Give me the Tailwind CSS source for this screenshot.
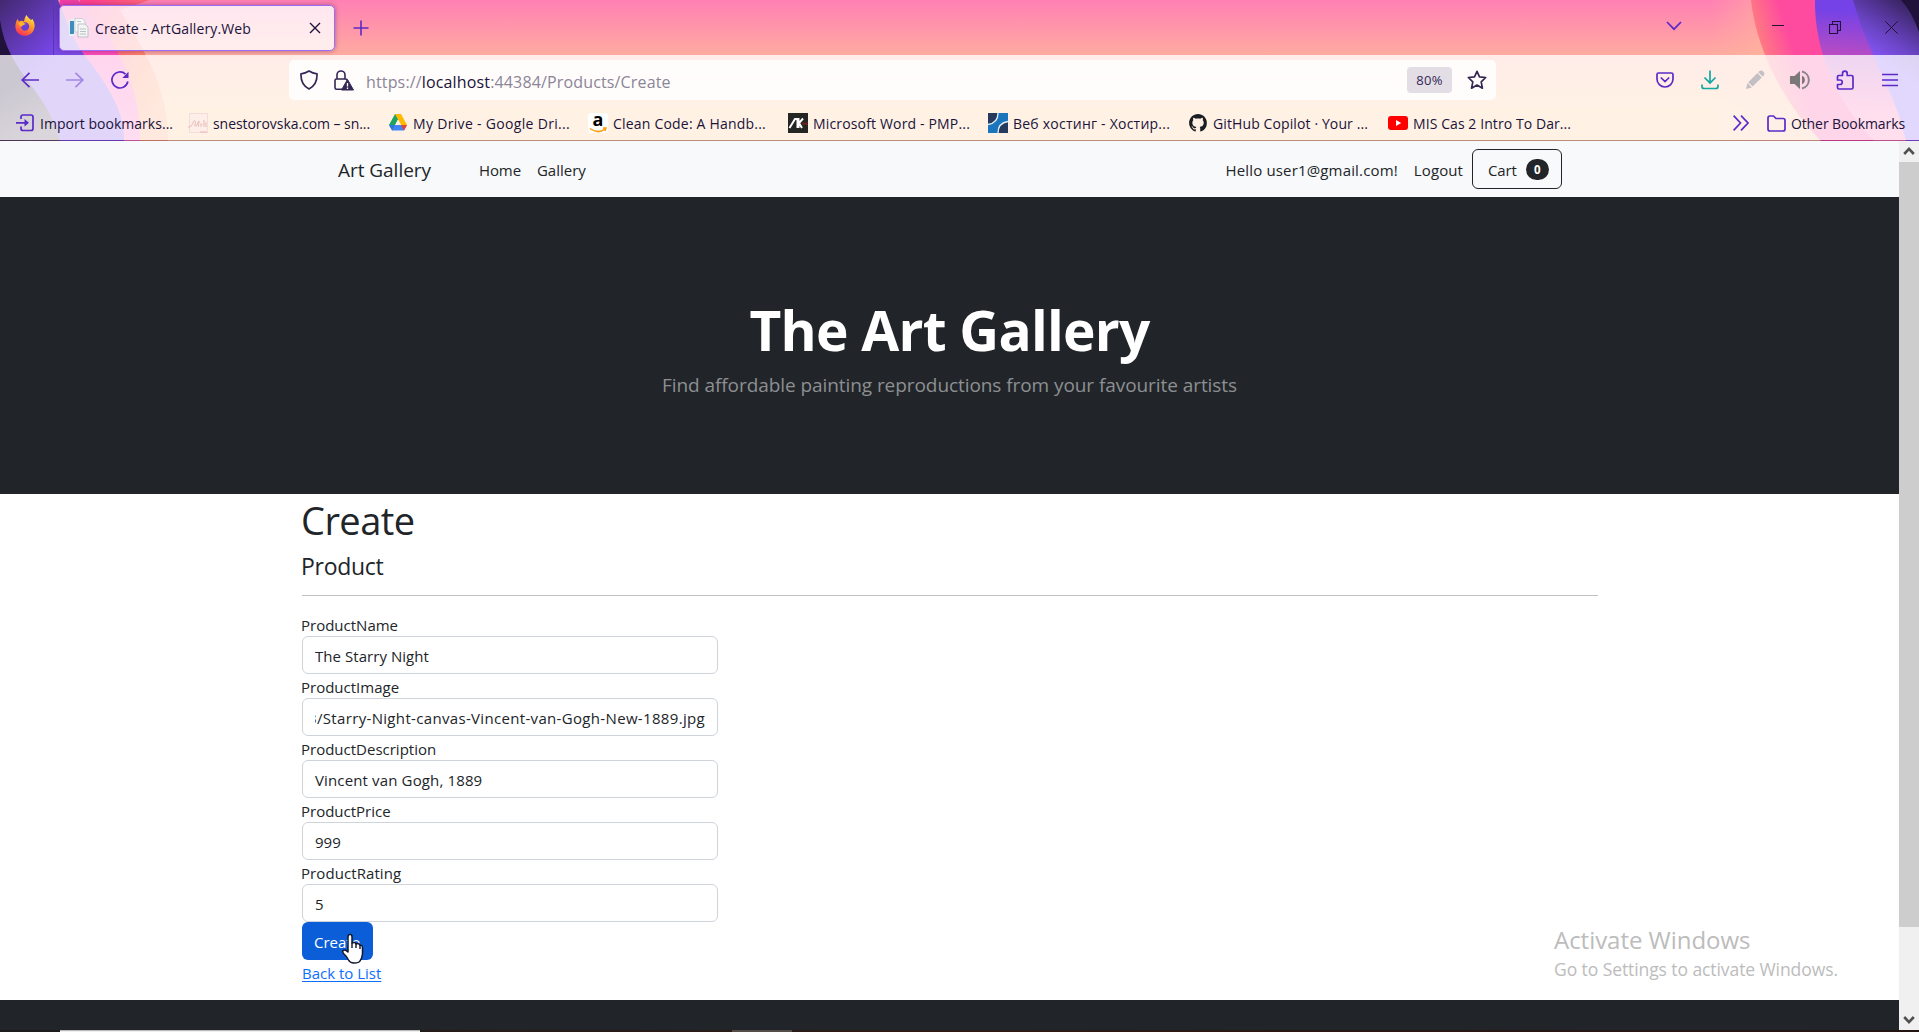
<!DOCTYPE html>
<html lang="en">
<head>
<meta charset="utf-8">
<title>Create - ArtGallery.Web</title>
<script src="https://cdn.jsdelivr.net/npm/@tailwindcss/browser@4"></script>
</head>
<body class="w-[1919px] h-[1032px] overflow-hidden relative flex flex-col bg-white text-[#212529] font-['Open_Sans','Noto_Sans',sans-serif] text-[15px]">

<!-- Browser chrome -->
<header class="relative isolate h-[141px] shrink-0 flex flex-col text-[#20123a] text-[14px] whitespace-nowrap">
  <svg class="absolute inset-0 -z-10" width="1919" height="141" viewBox="0 0 1919 141">
    <defs>
      <linearGradient id="base" x1="0" y1="0" x2="0" y2="1"><stop offset="0" stop-color="#ff80b4"/><stop offset=".39" stop-color="#ffaba0"/><stop offset=".78" stop-color="#ffc68e"/><stop offset="1" stop-color="#ffc890"/></linearGradient>
      <linearGradient id="lp" gradientUnits="userSpaceOnUse" x1="0" y1="0" x2="60" y2="60"><stop offset="0" stop-color="#43286f"/><stop offset=".8" stop-color="#7344df"/><stop offset="1" stop-color="#7c4ce8"/></linearGradient>
      <linearGradient id="lm" gradientUnits="userSpaceOnUse" x1="0" y1="0" x2="0" y2="141"><stop offset="0" stop-color="#f03fa5"/><stop offset=".35" stop-color="#ff4bb5"/><stop offset="1" stop-color="#ff70c0"/></linearGradient>
      <linearGradient id="lo" gradientUnits="userSpaceOnUse" x1="90" y1="0" x2="190" y2="80"><stop offset="0" stop-color="#ff3f90"/><stop offset=".7" stop-color="#ff8c62"/><stop offset="1" stop-color="#ffa070"/></linearGradient>
      <linearGradient id="gd" gradientUnits="userSpaceOnUse" x1="0" y1="90" x2="30" y2="141"><stop offset="0" stop-color="#20123a"/><stop offset="1" stop-color="#665068"/></linearGradient>
      <linearGradient id="rm" gradientUnits="userSpaceOnUse" x1="1752" y1="50" x2="1815" y2="30"><stop offset="0" stop-color="#ff8a78"/><stop offset=".6" stop-color="#ff4b9f"/><stop offset="1" stop-color="#ff4b9f"/></linearGradient>
      <linearGradient id="rp" gradientUnits="userSpaceOnUse" x1="1850" y1="0" x2="1840" y2="110"><stop offset=".1" stop-color="#7442e6"/><stop offset=".5" stop-color="#b74cc4"/><stop offset="1" stop-color="#ff70b4"/></linearGradient>
      <linearGradient id="rv" gradientUnits="userSpaceOnUse" x1="1905" y1="5" x2="1872" y2="55"><stop offset="0" stop-color="#3c2668"/><stop offset=".6" stop-color="#6a44c4"/><stop offset="1" stop-color="#8355f3"/></linearGradient>
      <linearGradient id="rg" gradientUnits="userSpaceOnUse" x1="1710" y1="0" x2="1775" y2="0"><stop offset="0" stop-color="#ffb0a0" stop-opacity="0"/><stop offset="1" stop-color="#ffb89a" stop-opacity=".7"/></linearGradient>
    </defs>
    <rect width="1919" height="141" fill="url(#base)"/>
    <path d="M80 0H150L120 10C150 60 168 90 168 141H60Z" fill="url(#lo)"/>
    <path d="M60 0H78C115 40 140 80 140 141H40Z" fill="url(#lm)"/>
    <path d="M0 0H58C70 30 75 45 90 62C110 90 124 110 124 141H0Z" fill="url(#lp)"/>
    <path d="M0 20C8 75 48 90 60 141H0Z" fill="url(#gd)"/>
    <rect x="1700" width="219" height="141" fill="url(#rg)"/>
    <path d="M1751 0C1756 50 1785 105 1821 141H1919V0Z" fill="url(#rm)"/>
    <path d="M1815 0C1814 55 1840 105 1874 141H1919V0Z" fill="url(#rp)"/>
    <path d="M1853 0C1868 55 1895 90 1906 141H1919V0Z" fill="url(#rv)"/>
    <path d="M1901 0Q1912 12 1919 32V0Z" fill="#20123a"/>
    <rect y="55" width="1919" height="85" fill="#fff" fill-opacity=".77"/>
    <rect y="140" width="1919" height="1" fill="#301040" fill-opacity=".32"/>
  </svg>

  <!-- Tab strip -->
  <div class="h-[55px] flex items-center">
    <div class="w-[54px] h-full flex items-center pl-[15px] border-r border-[#5a35b8]">
      <svg class="-mt-1" width="20" height="22" viewBox="0 0 20 22"><defs><linearGradient id="ff" x1=".8" y1="0" x2=".3" y2="1"><stop offset="0" stop-color="#fff04a"/><stop offset=".45" stop-color="#ff9a2c"/><stop offset="1" stop-color="#ff2f56"/></linearGradient></defs><path d="M11.500 0C13 2.500 14.500 3.500 16 5L17.500 4C20.500 9 20 13 18 16.500C15 21.500 7 22 3 18C-.5 14.500-.3 9 2.500 4L4 6.500C6 5 8 6 9 6.500C9.500 4 10 2 11.500 0Z" fill="url(#ff)"/><circle cx="10" cy="11.500" r="4.200" fill="#6b3fd4"/><path d="M3.500 8C6 6.500 8 7 9.500 8.200L11 9C9 10 7 10 6.500 12C5 11 4 10 3.500 8Z" fill="#ffb52b"/></svg>
    </div>
    <div class="ml-[5px] w-[276px] h-[46px] rounded-[5px] border border-[#9d6bf5] bg-white/80 shadow-[0_0_5px_rgba(60,20,80,0.45)] flex items-center pl-[9px] pr-[13px]">
      <svg width="20" height="20" viewBox="0 0 20 20"><path d="M0 1H6V18H0Z" fill="#e8eef2"/><path d="M1 3H5V16H1Z" fill="#3d8ebc"/><path d="M6 .5H13L16 3V14H6Z" fill="#f7f8f8" stroke="#bcc8cc" stroke-width=".8"/><path d="M9 6H16L19 9V19H9Z" fill="#f3f4f4" stroke="#aeb9bd" stroke-width=".8"/><path d="M11 11H17M11 13.500H17M11 16H17M8 3.500H12" stroke="#b8c2c6"/></svg>
      <span class="ml-[6px] mt-0.5 tracking-[0.13px]">Create - ArtGallery.Web</span>
      <svg class="ml-auto" width="12" height="12" viewBox="0 0 12 12"><path d="M1 1L11 11M11 1L1 11" stroke="#20123a" stroke-width="1.400"/></svg>
    </div>
    <svg class="ml-[18px]" width="16" height="16" viewBox="0 0 16 16"><path d="M8 0.500V15.500M.5 8H15.500" stroke="#5b2ac8" stroke-width="1.600"/></svg>
    <svg class="ml-auto mr-[90px] -mt-1" width="16" height="10" viewBox="0 0 16 10"><path d="M1 1L8 8.200L15 1" fill="none" stroke="#5b2ac8" stroke-width="1.700"/></svg>
    <svg class="mr-[45px] -mt-1" width="12" height="3" viewBox="0 0 12 3"><path d="M0 1.500H12" stroke="#20123a"/></svg>
    <svg class="mr-[44px] -mt-px" width="12" height="13" viewBox="0 0 12 13"><path d="M.5 3.500H8.500V12.500H.5ZM3.500 3.500V.5H11.500V9.500H8.500" fill="none" stroke="#20123a" stroke-width="1.100"/></svg>
    <svg class="mr-[21px] -mt-px" width="13" height="13" viewBox="0 0 13 13"><path d="M.3.3L12.700 12.700M12.700.3L.3 12.700" stroke="#20123a"/></svg>
  </div>

  <!-- Navigation toolbar -->
  <div class="h-[50px] flex items-center text-[#5b2ac8]">
    <div class="w-[289px] pl-[21px] flex items-center gap-[27px]">
      <svg width="18" height="16" viewBox="0 0 18 16" fill="none" stroke="currentColor" stroke-width="1.700"><path d="M18 8H1.200M8.500.8L1.200 8L8.500 15.200"/></svg>
      <svg class="opacity-45" width="18" height="16" viewBox="0 0 18 16" fill="none" stroke="currentColor" stroke-width="1.700"><path d="M0 8H16.800M9.500.8L16.800 8L9.500 15.200"/></svg>
      <svg width="18" height="18" viewBox="0 0 18 18" fill="none" stroke="currentColor" stroke-width="1.700"><path d="M16.800 10.500A8 8 0 1 1 14.500 3.200"/><path d="M17.500.8V7H11.300Z" fill="currentColor" stroke="none"/></svg>
    </div>
    <div class="w-[1207px] h-10 rounded-[5px] bg-white/85 flex items-center pl-[11px] pr-[9px] text-[#332754]">
      <svg width="18" height="20" viewBox="0 0 18 20" fill="none" stroke="currentColor" stroke-width="1.700" stroke-linejoin="round"><path d="M9 1C11.500 2.600 14 3.500 17 3.900C17.300 10.500 15 16 9 19C3 16 .7 10.500 1 3.900C4 3.500 6.500 2.600 9 1Z"/></svg>
      <svg class="ml-4" width="20" height="21" viewBox="0 0 20 21"><path d="M8 19.200H2.500Q1 19.200 1 17.700V10.500Q1 9 2.500 9H11.500Q13 9 13 10.500M3 9V5A4 4 0 0 1 11 5V9" fill="none" stroke="currentColor" stroke-width="1.600"/><path d="M13.500 9.500L19.500 20H7.500Z" fill="currentColor" stroke="currentColor" stroke-linejoin="round"/><path d="M13.500 13V16.500M13.500 17.500V19" stroke="#fff" stroke-width="1.300"/></svg>
      <span class="ml-3 mt-1 text-[16px] tracking-[0.15px] text-[#8b8598]">https://<span class="text-[#20123a]">localhost</span>:44384/Products/Create</span>
      <span class="ml-auto w-[45px] h-[26px] rounded bg-[#e3dde5] flex items-center justify-center pt-0.5 text-[13px] tracking-[0.3px]">80%</span>
      <svg class="ml-[15px]" width="20" height="20" viewBox="0 0 20 20"><path d="M10 1.300L12.500 6.800L18.700 7.500L14.200 11.800L15.400 18.200L10 15L4.600 18.200L5.800 11.800L1.300 7.500L7.500 6.800Z" fill="none" stroke="currentColor" stroke-width="1.700" stroke-linejoin="round"/></svg>
    </div>
    <div class="ml-auto mr-[7px] grid grid-cols-6 w-[270px] justify-items-center items-center">
      <svg width="18" height="16" viewBox="0 0 18 16" fill="none" stroke="currentColor" stroke-width="1.700"><path d="M2.500 1H15.500Q17 1 17 2.500V7A8 8 0 0 1 1 7V2.500Q1 1 2.500 1ZM4.800 5.500L9 9.500L13.200 5.500"/></svg>
      <svg class="text-[#10a8a0]" width="18" height="20" viewBox="0 0 18 20" fill="none" stroke="currentColor" stroke-width="1.700"><path d="M9 .5V13M3.500 7.500L9 13L14.500 7.500M1 14.500V16.500Q1 18.500 3 18.500H15Q17 18.500 17 16.500V14.500"/></svg>
      <svg width="20" height="20" viewBox="0 0 20 20" fill="#c3c0c3"><path d="M1 19L2.500 13L6.800 17.400ZM3.200 12.200L12.500 3L16.800 7.400L7.600 16.600ZM13.300 2.200L14.500 1C15.500 0 17 .3 18 1.200L18.800 2.200C19.700 3.200 19.700 4.500 18.800 5.400L17.600 6.600Z"/></svg>
      <svg width="20" height="20" viewBox="0 0 20 20"><path d="M0 6H4.500L10 1V19L4.500 14H0Z" fill="#7b7878"/><path d="M12 5.800A4.500 4.500 0 0 1 12 14.200Z" fill="#7b7878"/><path d="M12 1.500A8.700 8.700 0 0 1 12 18.500" fill="none" stroke="#8b8588" stroke-width="2"/></svg>
      <svg width="18" height="20" viewBox="0 0 18 20" fill="none" stroke="currentColor" stroke-width="1.700" stroke-linejoin="round"><path d="M1.500 8.500V6.500Q1.500 5.500 2.500 5.500H6.500V3.500A2.300 2.300 0 0 1 11.200 3.500V5.500H15.500Q17 5.500 17 7V17.500Q17 19 15.500 19H3Q1.500 19 1.500 17.500V14.500H4A2.200 2.200 0 0 0 4 10H1.500Z"/></svg>
      <svg width="16" height="14" viewBox="0 0 16 14" stroke="currentColor" stroke-width="1.700"><path d="M0 1.500H16M0 7H16M0 12.500H16"/></svg>
    </div>
  </div>

  <!-- Bookmarks bar -->
  <div class="h-[35px] flex items-center pt-px">
    <div class="w-[173px] pl-[15px] flex items-center gap-[5px]">
      <svg class="shrink-0" width="20" height="18" viewBox="0 0 20 18" fill="none" stroke="#5b2ac8" stroke-width="1.700"><path d="M6 5V3Q6 1 8 1H16Q18 1 18 3V14.500Q18 16.500 16 16.500H8Q6 16.500 6 14.500V12.500M1 8.800H12"/><path d="M9.500 5L14 8.800L9.500 12.600Z" fill="#5b2ac8" stroke="none"/></svg>
      <span class="tracking-[0.03px]">Import bookmarks...</span>
    </div>
    <div class="w-[200px] ml-[15px] flex items-center gap-[5px]">
      <svg class="shrink-0" width="20" height="20" viewBox="0 0 20 20"><rect x="1.500" y=".5" width="18" height="19" fill="#fdeee9" stroke="#f6dcd6"/><path d="M0 14C5 15 5 6 7 8S4 15 9 12M9 12C11 6 12 7 10 14M13 14C13 10 13 10 14 12M16 7V14M18 9V14M12 19H19" stroke="#dba9a5" fill="none" stroke-width=".7"/></svg>
      <span class="tracking-[-0.06px]">snestorovska.com – sn...</span>
    </div>
    <div class="w-[200px] flex items-center gap-[5px]">
      <svg class="shrink-0" width="20" height="18" viewBox="0 0 20 18"><path d="M7 0H13L4.500 16.500L1 11Z" fill="#1ea362"/><path d="M7 0H13L19 11H13Z" fill="#ffba00"/><path d="M4 16.500L7 11H19L16 16.500Z" fill="#4285f4"/><path d="M13 11H19L16 16.500Z" fill="#ea4335"/><path d="M1 11H7L4 16.500Z" fill="#2f74e0"/><path d="M10 5.500L13 11H7Z" fill="#fff2e5"/></svg>
      <span class="tracking-[0.32px]">My Drive - Google Dri...</span>
    </div>
    <div class="w-[200px] flex items-center gap-[5px]">
      <span class="relative w-5 h-5 shrink-0 bg-white rounded-[3px] flex justify-center text-black font-bold text-[18px] leading-[13px]">a<svg class="absolute bottom-0 left-0" width="20" height="6" viewBox="0 0 20 6"><path d="M2 1.500Q10 7.500 17 2M15 1H18L17 4" fill="none" stroke="#ff9d0a" stroke-width="1.500"/></svg></span>
      <span class="tracking-[0.2px]">Clean Code: A Handb...</span>
    </div>
    <div class="w-[200px] flex items-center gap-[5px]">
      <svg class="shrink-0" width="20" height="20" viewBox="0 0 20 20"><rect width="20" height="20" fill="#242624"/><path d="M1.500 15L7 6H9.500V15M10.500 5V15M15 5.500L11 10L14 15" fill="none" stroke="#fff" stroke-width="2"/><path d="M15 9V12L17 10L19 12V9" fill="none" stroke="#8c1d20"/></svg>
      <span class="tracking-[0.16px]">Microsoft Word - PMP...</span>
    </div>
    <div class="w-[200px] flex items-center gap-[5px]">
      <svg class="shrink-0" width="20" height="20" viewBox="0 0 20 20"><rect width="20" height="20" fill="#1b75bc"/><path d="M0 0H10Q10 10 0 11Z" fill="#263a5e"/><path d="M20 9V20H10Q10 10 20 9Z" fill="#263a5e"/><path d="M10 0Q10 10 0 11.500M10 20Q10 10 20 8.500" fill="none" stroke="#e4eef5" stroke-width="1.300"/></svg>
      <span class="tracking-[0.23px]">Веб хостинг - Хостир...</span>
    </div>
    <div class="w-[200px] flex items-center gap-[5px]">
      <svg class="shrink-0" width="20" height="18" viewBox="0 0 18 16"><path transform="translate(1)" fill="#1b1f23" d="M8 0C3.580 0 0 3.580 0 8c0 3.540 2.290 6.530 5.470 7.590.4.070.55-.17.55-.38 0-.19-.01-.82-.01-1.490-2.010.37-2.530-.49-2.690-.94-.09-.23-.48-.94-.82-1.130-.28-.15-.68-.52-.01-.53.63-.01 1.080.58 1.230.82.72 1.210 1.870.87 2.330.66.070-.52.28-.87.51-1.070-1.780-.2-3.640-.89-3.640-3.950 0-.87.31-1.590.82-2.150-.08-.2-.36-1.020.08-2.120 0 0 .67-.21 2.200.82.640-.18 1.320-.27 2-.27.68 0 1.360.09 2 .27 1.530-1.040 2.200-.82 2.200-.82.440 1.100.16 1.920.08 2.120.51.560.82 1.270.82 2.150 0 3.070-1.870 3.750-3.650 3.950.29.25.54.73.54 1.480 0 1.070-.01 1.930-.01 2.200 0 .21.150.46.550.38A8.010 8.010 0 0016 8c0-4.420-3.580-8-8-8z"/></svg>
      <span class="tracking-[0.11px]">GitHub Copilot · Your ...</span>
    </div>
    <div class="flex items-center gap-[5px]">
      <svg class="shrink-0" width="20" height="14" viewBox="0 0 20 14"><rect width="20" height="14" rx="3" fill="#f00"/><path d="M8 4L13.200 7L8 10Z" fill="#fff"/></svg>
      <span class="tracking-[0.08px]">MIS Cas 2 Intro To Dar...</span>
    </div>
    <svg class="ml-auto mr-[18px]" width="16" height="16" viewBox="0 0 16 16" fill="none" stroke="#5b2ac8" stroke-width="1.700"><path d="M.6.6L7.500 8L.6 15.400M8 .6L15 8L8 15.400"/></svg>
    <svg class="mr-[5px]" width="19" height="17" viewBox="0 0 19 17" fill="none" stroke="#5b2ac8" stroke-width="1.700"><path d="M1 3Q1 1 3 1H6.500L9 3.500H16Q18 3.500 18 5.500V14Q18 16 16 16H3Q1 16 1 14Z"/></svg>
    <span class="mr-[14px] tracking-[-0.09px]">Other Bookmarks</span>
  </div>
</header>

<!-- Page viewport -->
<div class="h-[889px] flex">
  <div class="w-[1899px] flex flex-col">
    <nav class="h-14 bg-[#f8f9fa] flex items-center pl-[338px] pr-[337px] whitespace-nowrap">
      <a class="text-[19px] mt-[3px] tracking-[-0.04px]">Art Gallery</a>
      <a class="ml-[48px] mt-[3px] tracking-[-0.1px]">Home</a>
      <a class="ml-4 mt-[3px]">Gallery</a>
      <span class="ml-auto mt-[3px] tracking-[0.16px]">Hello user1@gmail.com!</span>
      <a class="ml-4 mr-[9px] mt-[3px] tracking-[0.1px]">Logout</a>
      <button class="w-[90px] h-10 rounded-md border border-[#212529] flex items-center pl-[15px]"><span class="mt-[3px] tracking-[-0.1px]">Cart</span><span class="ml-[9px] w-[23px] h-[21px] rounded-full bg-[#212529] text-white text-[11.5px] font-bold flex items-center justify-center pt-0.5">0</span></button>
    </nav>
    <section class="h-[297px] bg-[#212529] text-center pt-[100px]">
      <h1 class="text-[55px] leading-[66px] font-bold text-white tracking-[-0.75px]">The Art Gallery</h1>
      <p class="mt-[7px] text-[19px] leading-[30px] text-[#8d8f92] tracking-[-0.07px]">Find affordable painting reproductions from your favourite artists</p>
    </section>
    <main class="h-[506px] pl-[302px] pr-[301px] pt-0.5">
      <h1 class="text-[38px] leading-[48px] tracking-[-0.55px] -ml-px">Create</h1>
      <h4 class="mt-[8px] text-[23px] leading-7 tracking-[-0.3px] -ml-px">Product</h4>
      <hr class="mt-[15px] mb-[16px] border-[#c0c1c3]">
      <form class="w-[416px] leading-6">
        <label class="block h-6 pt-px -ml-px">ProductName</label>
        <div class="h-[38px] rounded-md border border-[#ced4da] px-3 pt-[7px] tracking-[0.05px]">The Starry Night</div>
        <label class="block h-6 pt-px -ml-px">ProductImage</label>
        <div class="h-[38px] rounded-md border border-[#ced4da] px-3 pt-[7px] tracking-[0.33px]"><div class="flex justify-end overflow-hidden whitespace-nowrap"><span>3/Starry-Night-canvas-Vincent-van-Gogh-New-1889.jpg</span></div></div>
        <label class="block h-6 pt-px -ml-px">ProductDescription</label>
        <div class="h-[38px] rounded-md border border-[#ced4da] px-3 pt-[7px] tracking-[0.14px]">Vincent van Gogh, 1889</div>
        <label class="block h-6 pt-px -ml-px">ProductPrice</label>
        <div class="h-[38px] rounded-md border border-[#ced4da] px-3 pt-[7px]">999</div>
        <label class="block h-6 pt-px -ml-px tracking-[0.08px]">ProductRating</label>
        <div class="h-[38px] rounded-md border border-[#ced4da] px-3 pt-[7px]">5</div>
        <button type="button" class="relative block w-[71px] h-[38px] rounded-md bg-[#0b5ed7] text-white text-left pl-3 pt-[2px]">Create
          <svg class="absolute left-[39px] top-[11px]" width="24" height="32" viewBox="0 0 24 32"><path d="M7 3.500Q7 1.500 9 1.500T11 3.500V10Q14 8.500 15 11Q18 9.800 19 12.300Q21.500 12 21.500 14.500V21Q21 25 19 28Q18 30 13 30Q9 30 7.500 27Q6 23.500 3 21Q1 19 2 17.500Q4 16 7 19Z" fill="#fff" stroke="#10182c" stroke-width="1.500" stroke-linejoin="round"/><path d="M11 10V15M15 11V15M19 12.300V16" stroke="#10182c" stroke-width="1.400"/></svg>
        </button>
        <a class="block pt-px text-[#0d6efd] underline underline-offset-2">Back to List</a>
      </form>
    </main>
    <footer class="h-[30px] bg-[#212529]"></footer>
  </div>
  <div class="w-5 bg-[#f0f0f0] flex flex-col items-center">
    <svg class="h-[21px] shrink-0" width="12" height="21" viewBox="0 0 12 21"><path d="M1.200 13L6 7.800L10.800 13" fill="none" stroke="#505050" stroke-width="2.600"/></svg>
    <div class="w-full h-[765px] bg-[#cdcdcd]"></div>
    <svg class="mt-auto h-5 shrink-0" width="12" height="20" viewBox="0 0 12 20"><path d="M1.200 7L6 12.200L10.800 7" fill="none" stroke="#505050" stroke-width="2.600"/></svg>
  </div>
</div>

<!-- Top edge of the taskbar -->
<div class="h-0.5 flex bg-linear-to-r from-[#1c1c1c] via-[#2d1a14] to-[#231412]">
  <div class="ml-[60px] w-[360px] bg-[#f0f0f0] border-t border-[#b8b8b8]"></div>
  <div class="ml-[312px] w-[60px] bg-[#544c46]"></div>
</div>

<!-- Activation watermark -->
<div class="absolute left-[1554px] top-[923px] text-[#bcbcbc] whitespace-nowrap">
  <p class="text-[24px] leading-[34px] tracking-[-0.03px]">Activate Windows</p>
  <p class="text-[17.5px] leading-6 tracking-[-0.08px]">Go to Settings to activate Windows.</p>
</div>
</body>
</html>
